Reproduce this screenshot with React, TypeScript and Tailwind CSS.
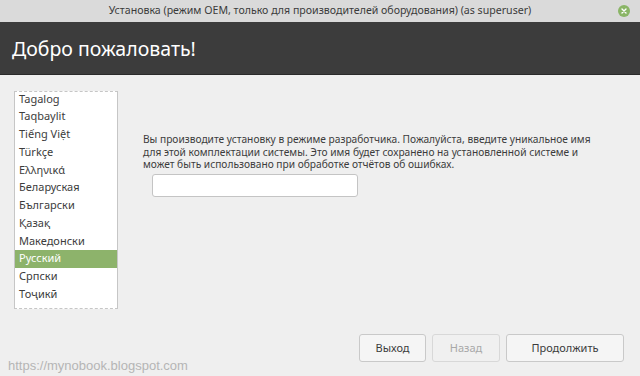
import React from "react";

const LANGS = [
  "Tagalog",
  "Taqbaylit",
  "Tiếng Việt",
  "Türkçe",
  "Ελληνικά",
  "Беларуская",
  "Български",
  "Қазақ",
  "Македонски",
  "Русский",
  "Српски",
  "Тоҷикӣ",
  "Українська",
];

export default function App() {
  return (
    <div className="relative flex flex-col w-[640px] h-[376px] overflow-hidden bg-[#efefef] font-['Noto_Sans',sans-serif] text-[#3c3c3c]">
      {/* title bar */}
      <div className="relative flex items-center justify-center h-[22px] bg-[#dadada] text-[10.6px] text-[#3a3a3a]">
        Установка (режим OEM, только для производителей оборудования) (as superuser)
        <div className="absolute right-[10px] top-[5px] flex items-center justify-center w-[12px] h-[12px] rounded-full bg-[#8ab566]">
          <svg width="6" height="6" viewBox="0 0 6 6">
            <path d="M1 1L5 5M5 1L1 5" stroke="#fff" strokeWidth="1.4" strokeLinecap="round" />
          </svg>
        </div>
      </div>

      {/* header */}
      <div className="flex items-center h-[53px] px-[12px] pt-[2px] bg-[#3c3c3c] border-b border-[#2a2a2a] text-[19.5px] text-white">
        Добро пожаловать!
      </div>

      <div className="flex flex-col flex-1 min-h-0">
        <div className="flex px-[14px] pt-[16px]">
          <div className="w-[104px] h-[218px] overflow-hidden bg-white border border-[#c6c6c6] [border-top-style:dashed] [border-bottom-style:dashed]">
            <div className="-mt-[2px]">
              {LANGS.map((l) => (
                <div
                  key={l}
                  className={`flex items-center h-[17.75px] pl-[4px] text-[11px] ${
                    l === "Русский" ? "bg-[#8db36b] text-white" : "text-[#3c3c3c]"
                  }`}
                >
                  {l}
                </div>
              ))}
            </div>
          </div>

          <div className="flex flex-col ml-[25px] pt-[42px]">
            <p className="text-[10.2px] leading-[12.5px] text-[#3c3c3c]">
              Вы производите установку в режиме разработчика. Пожалуйста, введите уникальное имя
              <br />
              для этой комплектации системы. Это имя будет сохранено на установленной системе и
              <br />
              может быть использовано при обработке отчётов об ошибках.
            </p>
            <div className="ml-[9px] mt-[3px] w-[206px] h-[23px] bg-white border border-[#c4c4c4] rounded-[3px]" />
          </div>
        </div>

        <div className="flex justify-end gap-[6px] mt-auto pr-[16px] pb-[14px] text-[11px]">
          <button className="w-[67px] h-[28px] bg-[#f5f5f5] border border-[#c9c9c9] rounded-[3px] text-[#3c3c3c]">
            Выход
          </button>
          <button className="w-[68px] h-[28px] bg-[#f0f0f0] border border-[#d8d8d8] rounded-[3px] text-[#a8a8a8]">
            Назад
          </button>
          <button className="w-[118px] h-[28px] bg-[#f5f5f5] border border-[#c9c9c9] rounded-[3px] text-[#3c3c3c]">
            Продолжить
          </button>
        </div>
      </div>

      <div className="absolute left-[8px] bottom-[1px] font-['Liberation_Sans',Arial,sans-serif] text-[13px] text-[#b5b5b5]">
        https://mynobook.blogspot.com
      </div>
    </div>
  );
}
